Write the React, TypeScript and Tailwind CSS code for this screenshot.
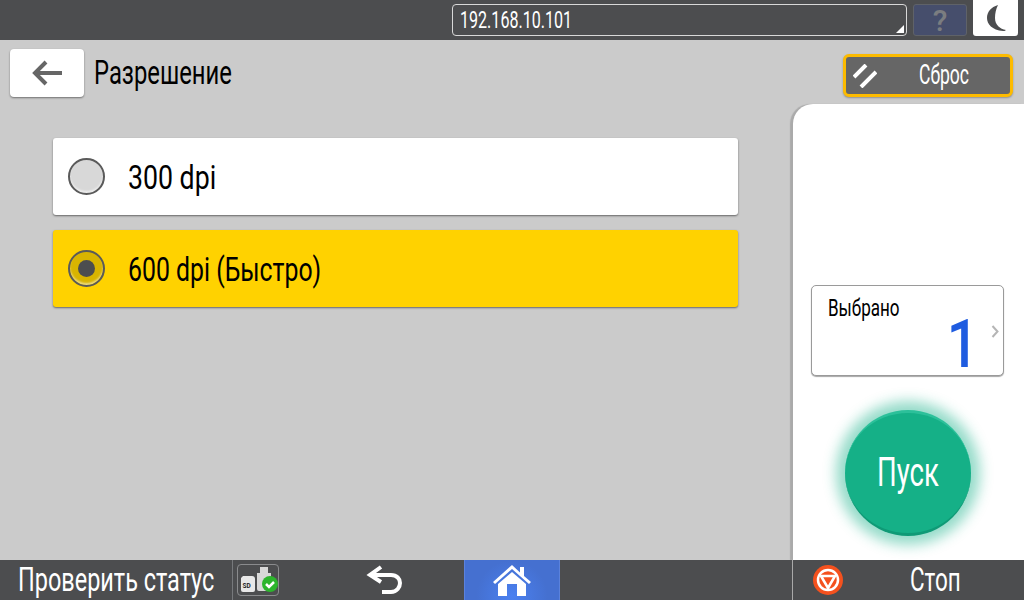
import type { ReactNode } from "react";

// narrow label: the device font is condensed, so squeeze Roboto horizontally
function Narrow({ children, className = "" }: { children: ReactNode; className?: string }) {
  return <span className={`inline-block whitespace-nowrap origin-left ${className}`}>{children}</span>;
}

function Radio({ checked }: { checked?: boolean }) {
  return (
    <div
      className={`w-[37px] h-[37px] rounded-full border-2 border-[#5a5a5a] flex items-center justify-center shrink-0 shadow-[inset_0_-2px_2px_rgba(255,255,255,0.5)] ${
        checked ? "bg-[#d9b400]" : "bg-[#d8d8d8]"
      }`}
    >
      {checked && <div className="w-[17px] h-[17px] rounded-full bg-[#4c4d4f]" />}
    </div>
  );
}

function Option({ label, checked }: { label: string; checked?: boolean }) {
  return (
    <div
      className={`h-[77px] rounded-[3px] flex items-center pl-[15px] shadow-[0_1px_2px_rgba(0,0,0,0.5)] ${
        checked ? "bg-[#ffd200]" : "bg-white"
      }`}
    >
      <Radio checked={checked} />
      <Narrow className={`ml-[23px] text-[34px] text-black translate-y-[1px] ${checked ? "scale-x-[0.73]" : "scale-x-[0.785]"}`}>
        {label}
      </Narrow>
    </div>
  );
}

export default function App() {
  return (
    <div
      className="w-[1024px] h-[600px] flex flex-col overflow-hidden bg-[#cbcbcb]"
      style={{ fontFamily: "Roboto, 'Noto Sans', sans-serif" }}
    >
      {/* top bar */}
      <div className="h-[40px] bg-[#4c4d4f] flex items-start pt-[4px] pl-[452px] shrink-0">
        <div className="relative w-[455px] h-[32px] border border-[#d8d8d8] rounded-[4px] flex items-center pl-[7px]">
          <Narrow className="text-[24px] text-white scale-x-[0.67]">192.168.10.101</Narrow>
          <div className="absolute right-[2px] bottom-[2px] w-0 h-0 border-l-[8px] border-l-transparent border-b-[8px] border-b-white" />
        </div>
        <div className="ml-[6px] w-[54px] h-[32px] border border-[#5f6268] rounded-[3px] bg-[#464e6c] flex items-center justify-center text-[30px] font-medium text-[#7b7d80]">
          ?
        </div>
        <div className="ml-[6px] w-[45px] h-[36px] -mt-[4px] bg-white rounded-b-[3px] flex items-center justify-center">
          <svg width="24" height="32" viewBox="0 0 24 32">
            <path d="M14 3C7 5 3 10 3 16s5 12 16 13c1 0 2 0 3-1-6-1-11-5-11-12 0-5 1-9 3-13z" fill="#4c4d4f" />
          </svg>
        </div>
      </div>

      {/* content */}
      <div className="flex-1 flex min-h-0">
        <div className="flex-1 flex flex-col">
          <div className="h-[48px] mt-[9px] flex items-center pl-[10px]">
            <div className="w-[74px] h-[48px] bg-white rounded-[4px] shadow-[0_1px_2px_rgba(0,0,0,0.45)] flex items-center justify-center">
              <svg width="32" height="26" viewBox="0 0 32 26" fill="none" stroke="#666" strokeWidth="4">
                <path d="M31 13H4M15 2 4 13l11 11" />
              </svg>
            </div>
            <Narrow className="ml-[10px] text-[34px] text-black scale-x-[0.7] -translate-y-[1px]">Разрешение</Narrow>
          </div>
          <div className="mt-[41px] ml-[53px] mr-[55px] flex flex-col gap-[15px]">
            <Option label="300 dpi" />
            <Option label="600 dpi (Быстро)" checked />
          </div>
        </div>

        <div className="w-[231px] flex flex-col">
          <div className="h-[64px] shrink-0 pt-[14px] pl-[50px]">
            <div className="w-[170px] h-[43px] rounded-[6px] border-[3px] border-[#fdbb00] bg-[#666] flex items-center pl-[7px] shadow-[0_1px_2px_rgba(0,0,0,0.3)]">
              <svg width="24" height="24" viewBox="0 0 24 24" stroke="#fff" strokeWidth="4">
                <path d="M1 13 13 1M8 23 23 8" />
              </svg>
              <Narrow className="ml-[42px] text-[27px] text-white scale-x-[0.65]">Сброс</Narrow>
            </div>
          </div>
          <div className="flex-1 bg-white rounded-tl-[20px] shadow-[-3px_0_1px_rgba(0,0,0,0.16)] flex flex-col items-center pt-[181px]">
            <div className="relative w-[193px] h-[91px] ml-[-2px] border border-[#9a9a9a] rounded-[5px] shadow-[0_1px_1px_rgba(0,0,0,0.35)] bg-white">
              <Narrow className="absolute left-[16px] top-[4px] text-[24px] text-black scale-x-[0.71]">Выбрано</Narrow>
              <span className="absolute right-[24px] top-[22px] text-[66px] leading-[74px] font-medium text-[#1f5ce0] origin-right scale-x-[0.85]">
                1
              </span>
              <svg className="absolute right-[3px] top-[39px]" width="9" height="13" viewBox="0 0 9 13" fill="none" stroke="#b5b5b5" strokeWidth="2">
                <path d="m1.500 1 5 5.500-5 5.500" />
              </svg>
            </div>
            <div className="mt-[34px] ml-[-1px] w-[126px] h-[126px] rounded-full bg-[#15b087] border-b-[3px] border-b-[#0f9a76] border-t-[3px] border-t-[#2cc09a] shadow-[0_0_13px_9px_rgba(21,176,135,0.45)] flex items-center justify-center">
              <Narrow className="text-[40px] text-white translate-x-[14px] scale-x-[0.69]">Пуск</Narrow>
            </div>
          </div>
        </div>
      </div>

      {/* bottom bar */}
      <div className="h-[40px] bg-[#4c4d4f] flex shrink-0 items-stretch">
        <div className="w-[233px] border-r border-[#77797c] flex items-center pl-[18px]">
          <Narrow className="text-[34px] text-white scale-x-[0.69] -translate-y-[1px]">Проверить статус</Narrow>
        </div>
        <div className="w-[231px] flex items-center pl-[4px] relative">
          <div className="w-[42px] h-[32px] border border-[#8a8b8d] rounded-[4px] relative">
            <svg width="40" height="30" viewBox="0 0 40 30">
              <path d="M5 11h9a3 3 0 0 1 3 3v11a2 2 0 0 1-2 2H5a2 2 0 0 1-2-2V13z" fill="#e8e8e8" />
              <text x="4.500" y="23" fontSize="6.500" fontWeight="700" fill="#222">SD</text>
              <path d="M19 8h14v16a2 2 0 0 1-2 2H21a2 2 0 0 1-2-2zM22 2h8v6h-8z" fill="#d8d8d8" />
              <circle cx="32" cy="19" r="8" fill="#2cb52c" />
              <path d="m28 19 3 3 5-5" fill="none" stroke="#fff" strokeWidth="2.500" />
            </svg>
          </div>
          <svg className="absolute left-[132px] top-[5px]" width="38" height="30" viewBox="0 0 38 30" fill="none" stroke="#fff" strokeWidth="4">
            <path d="M5 10h21c6 0 9 4 9 8s-3 9-9 9H17" />
            <path d="M16 2 5 10l11 7" />
          </svg>
        </div>
        <div className="w-[96px] bg-[#4570d0] border-x border-[#5b82dc] bg-[radial-gradient(circle_at_50%_90%,#4a80f0,#4570d0_60%)] flex items-center justify-center">
          <svg width="40" height="34" viewBox="0 0 40 34" fill="#fff">
            <path d="M20 2 1 19l2 2L20 6l17 15 2-2-7-6V4h-4v5.500z" />
            <path d="M6 21 20 9l14 12v12H25V21H15v12H6z" />
          </svg>
        </div>
        <div className="w-[232px]" />
        <div className="flex-1 border-l border-[#a9a9a9] flex items-center pl-[20px]">
          <svg width="30" height="30" viewBox="0 0 30 30" fill="none">
            <circle cx="15" cy="15" r="15" fill="#f4511e" />
            <circle cx="15" cy="15" r="10" stroke="#fff" strokeWidth="2.500" />
            <path d="M8 11h14l-7 12z" stroke="#fff" strokeWidth="2.500" strokeLinejoin="round" />
          </svg>
          <Narrow className="ml-[67px] text-[34px] text-white scale-x-[0.66] -translate-y-[1px]">Стоп</Narrow>
        </div>
      </div>
    </div>
  );
}
